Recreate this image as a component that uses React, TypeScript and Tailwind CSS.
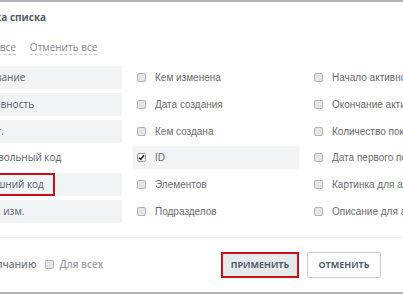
import * as React from 'react';

// Колонки настройки списка
const columns: { label: string; checked: boolean }[][] = [
  [
    { label: 'Название', checked: true },
    { label: 'Активность', checked: true },
    { label: 'Сорт.', checked: true },
    { label: 'Символьный код', checked: false },
    { label: 'Внешний код', checked: true },
    { label: 'Дата изм.', checked: true },
  ],
  [
    { label: 'Кем изменена', checked: false },
    { label: 'Дата создания', checked: false },
    { label: 'Кем создана', checked: false },
    { label: 'ID', checked: true },
    { label: 'Элементов', checked: false },
    { label: 'Подразделов', checked: false },
  ],
  [
    { label: 'Начало активности', checked: false },
    { label: 'Окончание активности', checked: false },
    { label: 'Количество показов', checked: false },
    { label: 'Дата первого показа', checked: false },
    { label: 'Картинка для анонса', checked: false },
    { label: 'Описание для анонса', checked: false },
  ],
];

const Box = ({ checked }: { checked: boolean }) =>
  checked ? (
    <span className="flex h-[9px] w-[9px] shrink-0 items-center justify-center rounded-[2px] border border-[#9a9a9a] bg-white">
      <svg width="7" height="7" viewBox="0 0 7 7">
        <path d="M1 3.6 L2.8 5.4 L6 1.3" fill="none" stroke="#222" strokeWidth="1.6" />
      </svg>
    </span>
  ) : (
    <span className="block h-[9px] w-[9px] shrink-0 rounded-[2px] border border-[#b4b4b4] bg-[#e4e4e4]" />
  );

export default function App() {
  return (
    <div className="h-[294px] w-[403px] overflow-hidden border-y-2 border-[#b3b4b9] bg-white">
      <div className="-ml-[44px] flex h-full w-[447px] flex-col">
        <div className="-ml-[5px] pt-[8px] font-['Open_Sans',sans-serif] text-[10px] font-bold leading-[14px] text-[#535c69]">
          Настройка списка
        </div>

        <div className="mt-[16px] flex gap-[14px] font-['Open_Sans',sans-serif] text-[10px] leading-[14px] text-[#80868e]">
          <span className="-ml-[6px] border-b border-dashed border-[#c4c8cc]">Отметить все</span>
          <span className="border-b border-dashed border-[#c4c8cc]">Отменить все</span>
        </div>

        <div className="mt-[11px] grid grid-cols-[166px_166px_166px] gap-x-[11px]">
          {columns.map((col, ci) => (
            <div key={ci} className="flex flex-col gap-[3.8px]">
              {col.map((item, ri) => (
                <div
                  key={item.label}
                  className={`relative flex h-[23px] items-center pl-[4px] ${item.checked ? 'bg-[#f1f4f6]' : ''}`}
                >
                  <Box checked={item.checked} />
                  <span
                    className={`ml-[9px] whitespace-nowrap text-[10px] ${
                      ci === 0
                        ? "font-['Open_Sans',sans-serif] text-[#535c69]"
                        : "font-['Liberation_Sans',Arial,sans-serif] text-[#6a6a6a]"
                    }`}
                  >
                    {item.label}
                  </span>
                  {ci === 0 && ri === 4 && (
                    <span className="absolute left-[20px] top-0 h-[23px] w-[79px] border-2 border-[#c8101a]" />
                  )}
                </div>
              ))}
            </div>
          ))}
        </div>

        <div className="mt-[14px] h-px bg-[#eef0f2]" />

        <div className="flex flex-1 items-center pr-[22px]">
          <span className="ml-[5px] whitespace-nowrap font-['Open_Sans',sans-serif] text-[10px] font-semibold text-[#737982]">
            По умолчанию
          </span>
          <span className="ml-[9px] flex">
            <Box checked={false} />
          </span>
          <span className="ml-[5px] font-['Open_Sans',sans-serif] text-[10px] font-semibold text-[#9ca1a7]">
            Для всех
          </span>
          <div className="ml-auto flex gap-[8px]">
            <button className="h-[26px] w-[78px] border-2 border-[#c8101a] bg-[#e6e9ec] font-['Open_Sans',sans-serif] text-[9px] font-bold text-[#535c69]">
              ПРИМЕНИТЬ
            </button>
            <button className="h-[26px] w-[74px] rounded-[2px] border border-[#c6cdd3] bg-white font-['Open_Sans',sans-serif] text-[9px] font-bold text-[#535c69]">
              ОТМЕНИТЬ
            </button>
          </div>
        </div>
      </div>
    </div>
  );
}
